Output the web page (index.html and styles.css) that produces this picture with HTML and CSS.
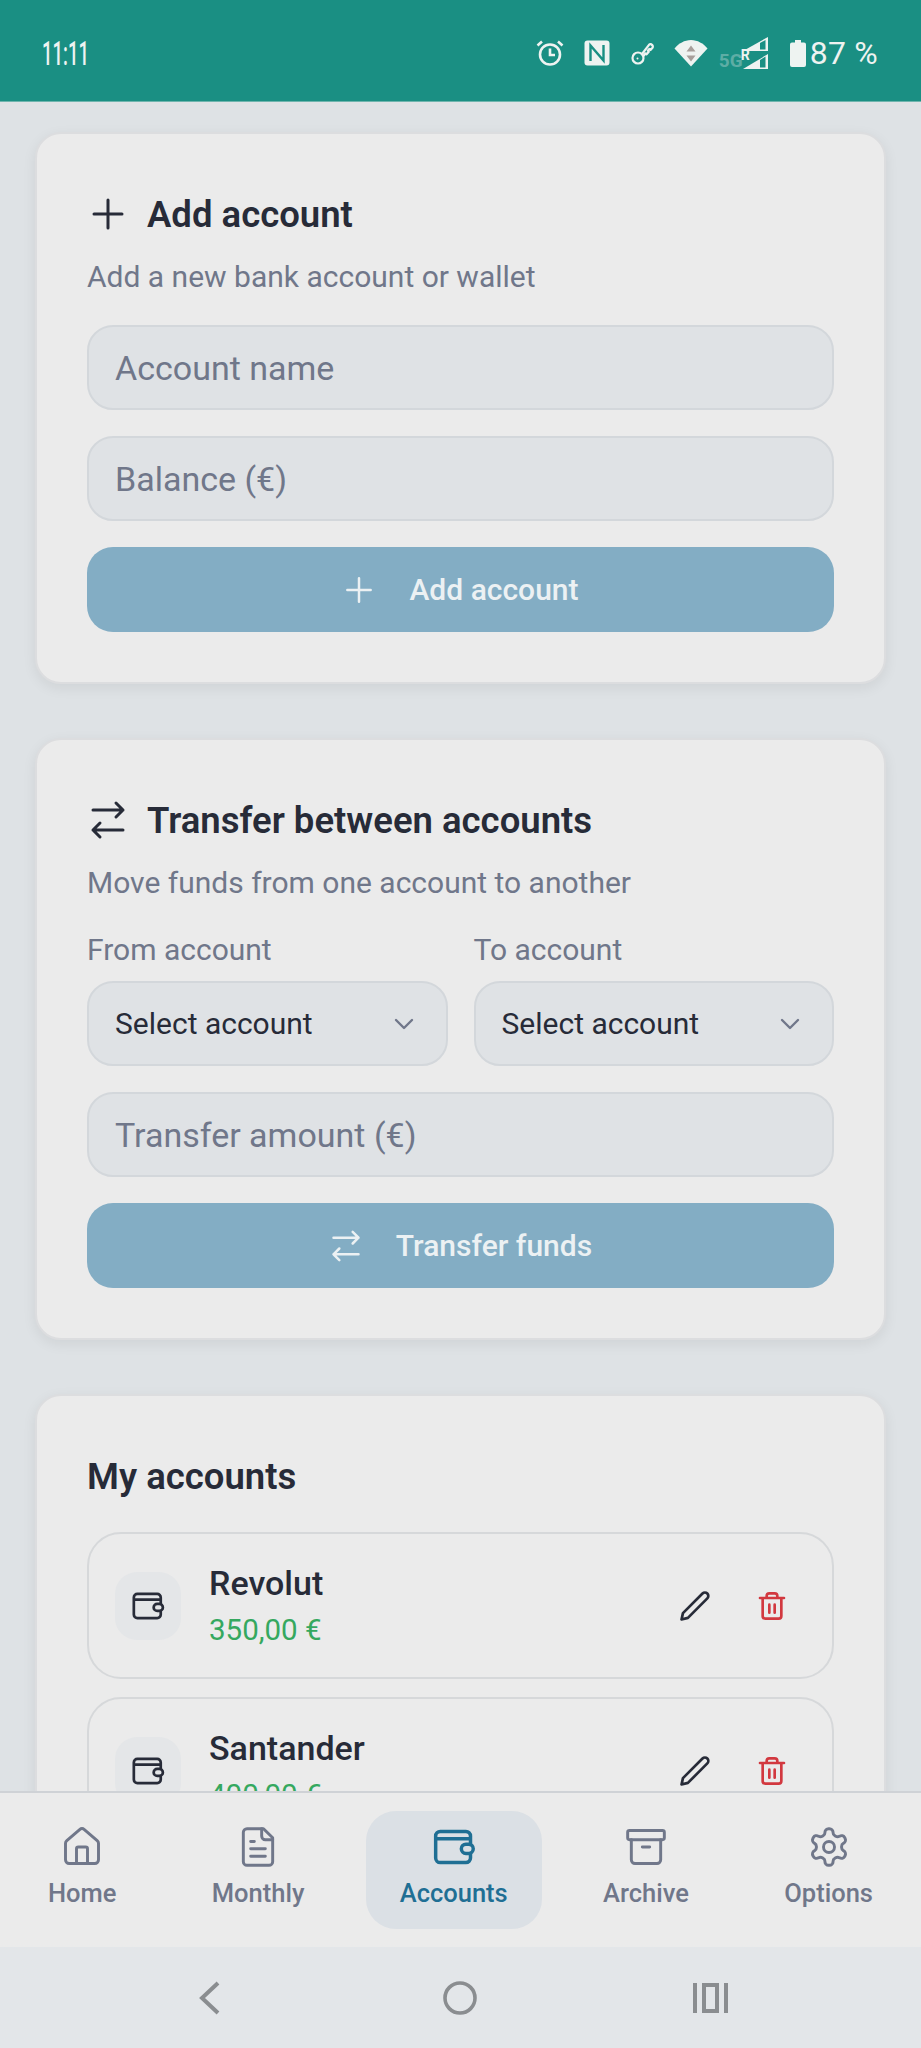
FILE: index.html
```html
<!DOCTYPE html>
<html lang="en">
<head>
    <meta charset="UTF-8">
    <meta name="viewport" content="width=device-width, initial-scale=1.0">
    <title>Accounts</title>
    <link rel="stylesheet" href="styles.css">
</head>
<body>
<svg class="icon-defs" width="0" height="0">
    <symbol id="i-plus" viewBox="0 0 24 24"><path d="M5 12h14M12 5v14"/></symbol>
    <symbol id="i-swap" viewBox="0 0 24 24"><path d="m16 3.500 3.500 3.500-3.500 3.500M19.500 7h-15M8 20.500 4.500 17 8 13.500M4.500 17h15"/></symbol>
    <symbol id="i-chevron" viewBox="0 0 24 24"><path d="m6 9 6 6 6-6"/></symbol>
    <symbol id="i-wallet" viewBox="0 0 24 24"><path d="M21 10.500V6a2.500 2.500 0 0 0-2.500-2.500h-14A2.500 2.500 0 0 0 2 6v12a2.500 2.500 0 0 0 2.500 2.500h14A2.500 2.500 0 0 0 21 18v-2.500M2 7.500h19"/><rect x="16" y="10.500" width="6.500" height="5" rx="2.500"/></symbol>
    <symbol id="i-pencil" viewBox="0 0 24 24"><path d="M2.500 21.500l1-4.500L17.300 3.200a2.300 2.300 0 0 1 3.400 3.400L7 20.400z"/></symbol>
    <symbol id="i-trash" viewBox="0 0 24 24"><path d="M3 6h18M19 6v13.500a2 2 0 0 1-2 2H7a2 2 0 0 1-2-2V6M8 6V4.500a2 2 0 0 1 2-2h4a2 2 0 0 1 2 2V6M10 11v6M14 11v6"/></symbol>
    <symbol id="i-home" viewBox="0 0 24 24"><path d="M15 21v-8a1 1 0 0 0-1-1h-4a1 1 0 0 0-1 1v8"/><path d="M3 10a2 2 0 0 1 .709-1.528l7-5.999a2 2 0 0 1 2.582 0l7 5.999A2 2 0 0 1 21 10v9a2 2 0 0 1-2 2H5a2 2 0 0 1-2-2z"/></symbol>
    <symbol id="i-file" viewBox="0 0 24 24"><path d="M15 2H6a2 2 0 0 0-2 2v16a2 2 0 0 0 2 2h12a2 2 0 0 0 2-2V7Z"/><path d="M14 2v4a2 2 0 0 0 2 2h4M10 9H8M16 13H8M16 17H8"/></symbol>
    <symbol id="i-archive" viewBox="0 0 24 24"><rect x="2" y="3" width="20" height="5" rx="1"/><path d="M4 8v11a2 2 0 0 0 2 2h12a2 2 0 0 0 2-2V8M10 12h4"/></symbol>
    <symbol id="i-gear" viewBox="0 0 24 24"><path d="M12.220 2h-.44a2 2 0 0 0-2 2v.18a2 2 0 0 1-1 1.730l-.43.25a2 2 0 0 1-2 0l-.15-.08a2 2 0 0 0-2.730.73l-.22.38a2 2 0 0 0 .73 2.730l.15.1a2 2 0 0 1 1 1.720v.51a2 2 0 0 1-1 1.740l-.15.09a2 2 0 0 0-.73 2.730l.22.38a2 2 0 0 0 2.730.73l.15-.08a2 2 0 0 1 2 0l.43.25a2 2 0 0 1 1 1.730V20a2 2 0 0 0 2 2h.44a2 2 0 0 0 2-2v-.18a2 2 0 0 1 1-1.730l.43-.25a2 2 0 0 1 2 0l.15.08a2 2 0 0 0 2.730-.73l.22-.39a2 2 0 0 0-.73-2.730l-.15-.08a2 2 0 0 1-1-1.740v-.5a2 2 0 0 1 1-1.740l.15-.09a2 2 0 0 0 .73-2.730l-.22-.38a2 2 0 0 0-2.730-.73l-.15.08a2 2 0 0 1-2 0l-.43-.25a2 2 0 0 1-1-1.730V4a2 2 0 0 0-2-2z"/><circle cx="12" cy="12" r="3"/></symbol>
</svg>

<div class="screen">
    <!-- Android status bar -->
    <header class="status-bar">
        <span class="status-time">11:11</span>
        <div class="status-icons">
            <svg class="st-alarm" viewBox="0 0 28 28" width="28" height="28" fill="none" stroke="#eef3f1" stroke-width="2.600">
                <circle cx="14" cy="15.500" r="10"/>
                <path d="M14 9.500v6.500h5M1.500 6.500 6 2.500M26.500 6.500 22 2.500"/>
            </svg>
            <svg class="st-nfc" viewBox="0 0 26 26" width="26" height="26">
                <rect x="0.500" y="0.500" width="25" height="25" rx="3" fill="#eef3f1"/>
                <path d="M6.500 21V5.500L19.500 20.500V5" fill="none" stroke="#1a8f83" stroke-width="2.400"/>
            </svg>
            <svg class="st-key" viewBox="0 0 24 24" width="24" height="24" fill="none" stroke="#eef3f1" stroke-width="2.200" stroke-linejoin="round">
                <circle cx="7" cy="17" r="5.500"/>
                <circle cx="6.500" cy="17.500" r="1" fill="#eef3f1" stroke="none"/>
                <path d="M11 13 18 3.800a2 2 0 0 1 3 .2 2 2 0 0 1 .5 2.800L19.500 9l-1.200-1-1.500 1.800 1 1-2.200 2.500-1-1L12.500 15"/>
            </svg>
            <svg class="st-wifi" viewBox="0 0 34 28" width="34" height="28">
                <path d="M17 27.500 0.500 9.500C4.500 4.500 10.500 1 17 1s12.500 3.500 16.500 8.500z" fill="#eef3f1"/>
                <path d="M17 6.500l4.500 6h-9zM17 22.500l-4.500-6h9z" fill="#a79f9b"/>
            </svg>
            <span class="st-5g">5G</span>
            <div class="st-signal">
                <svg viewBox="0 0 25 32" width="25" height="32">
                    <path d="M0 14 25 0v14z" fill="#eef3f1"/>
                    <path d="M17 12.500V6L22.500 3v9.500z" fill="#1a8f83"/>
                    <path d="M0 32 25 17v15z" fill="#eef3f1"/>
                    <path d="M17 30.500V23l5.500-3.500v11z" fill="#1a8f83"/>
                </svg>
                <span class="st-r">R</span>
            </div>
            <svg class="st-battery" viewBox="0 0 16 27" width="16" height="27">
                <path d="M5 0h6v2.500h3a2 2 0 0 1 2 2V25a2 2 0 0 1-2 2H2a2 2 0 0 1-2-2V4.500a2 2 0 0 1 2-2h3z" fill="#eef3f1"/>
            </svg>
            <span class="status-level">87 %</span>
        </div>
    </header>

    <main class="content">
        <section class="card">
            <h2 class="card-title">
                <svg class="title-icon"><use href="#i-plus"/></svg>
                Add account
            </h2>
            <p class="card-sub">Add a new bank account or wallet</p>
            <div class="stack">
                <input class="field" type="text" placeholder="Account name">
                <input class="field" type="text" placeholder="Balance (€)">
                <button class="btn" type="button">
                    <svg class="btn-icon"><use href="#i-plus"/></svg>
                    Add account
                </button>
            </div>
        </section>

        <section class="card">
            <h2 class="card-title">
                <svg class="title-icon"><use href="#i-swap"/></svg>
                Transfer between accounts
            </h2>
            <p class="card-sub">Move funds from one account to another</p>
            <div class="select-row">
                <div class="select-col">
                    <label class="select-label">From account</label>
                    <div class="select">
                        <span>Select account</span>
                        <svg class="select-chevron"><use href="#i-chevron"/></svg>
                    </div>
                </div>
                <div class="select-col">
                    <label class="select-label">To account</label>
                    <div class="select">
                        <span>Select account</span>
                        <svg class="select-chevron"><use href="#i-chevron"/></svg>
                    </div>
                </div>
            </div>
            <div class="stack">
                <input class="field" type="text" placeholder="Transfer amount (€)">
                <button class="btn" type="button">
                    <svg class="btn-icon"><use href="#i-swap"/></svg>
                    Transfer funds
                </button>
            </div>
        </section>

        <section class="card">
            <h2 class="card-title card-title-plain">My accounts</h2>
            <div class="account-list">
                <div class="account">
                    <div class="account-tile"><svg class="wallet-icon"><use href="#i-wallet"/></svg></div>
                    <div class="account-info">
                        <div class="account-name">Revolut</div>
                        <div class="account-balance">350,00 €</div>
                    </div>
                    <svg class="act-edit"><use href="#i-pencil"/></svg>
                    <svg class="act-delete"><use href="#i-trash"/></svg>
                </div>
                <div class="account">
                    <div class="account-tile"><svg class="wallet-icon"><use href="#i-wallet"/></svg></div>
                    <div class="account-info">
                        <div class="account-name">Santander</div>
                        <div class="account-balance">400,00 €</div>
                    </div>
                    <svg class="act-edit"><use href="#i-pencil"/></svg>
                    <svg class="act-delete"><use href="#i-trash"/></svg>
                </div>
            </div>
        </section>
    </main>

    <nav class="tabs">
        <a class="tab"><svg class="tab-icon"><use href="#i-home"/></svg>Home</a>
        <a class="tab"><svg class="tab-icon"><use href="#i-file"/></svg>Monthly</a>
        <a class="tab tab-active"><svg class="tab-icon"><use href="#i-wallet"/></svg>Accounts</a>
        <a class="tab"><svg class="tab-icon"><use href="#i-archive"/></svg>Archive</a>
        <a class="tab"><svg class="tab-icon"><use href="#i-gear"/></svg>Options</a>
    </nav>

    <!-- Android navigation buttons -->
    <footer class="sys-nav">
        <svg viewBox="0 0 22 34" width="22" height="34" fill="none" stroke="#8a8d90" stroke-width="4"><path d="M20 2 4 17l16 15"/></svg>
        <svg class="sys-home" viewBox="0 0 34 34" width="34" height="34" fill="none" stroke="#8a8d90" stroke-width="3.600"><circle cx="17" cy="17" r="15"/></svg>
        <svg viewBox="0 0 35 30" width="35" height="30" fill="none" stroke="#8a8d90" stroke-width="4"><path d="M2 0v30M33 0v30"/><rect x="11" y="2" width="13" height="26"/></svg>
    </footer>
</div>
</body>
</html>
```

FILE: styles.css
```css
* {
    box-sizing: border-box;
}
body {
    margin: 0;
    font-family: Roboto, "Liberation Sans", sans-serif;
    color: #272b38;
}
.icon-defs {
    position: absolute;
}
svg {
    flex: none;
}
symbol {
    overflow: visible;
}
.screen {
    display: flex;
    flex-direction: column;
    height: 2048px;
    background: #dee2e5;
    overflow: hidden;
}

/* status bar */
.status-bar {
    display: flex;
    align-items: center;
    justify-content: space-between;
    height: 102px;
    padding: 5px 43px 0 42px;
    background: #1a8f83;
    border-bottom: 1px solid #6fb5ae;
    color: #eef3f1;
    flex: none;
}
.status-time {
    display: inline-block;
    font-size: 33px;
    font-weight: 500;
    transform: scaleX(0.56);
    transform-origin: left center;
}
.status-icons {
    display: flex;
    align-items: center;
}
.st-alarm {
    margin-right: 20px;
}
.st-nfc {
    margin-right: 21px;
}
.st-key {
    margin-right: 19px;
}
.st-wifi {
    margin-right: 11px;
}
.st-5g {
    width: 24px;
    margin-top: 15px;
    font-size: 19px;
    font-weight: 700;
    color: #5dada5;
}
.st-signal {
    position: relative;
    width: 25px;
    height: 32px;
    margin-right: 22px;
}
.st-r {
    position: absolute;
    left: -2px;
    top: 11px;
    font-size: 14px;
    font-weight: 700;
    line-height: 15px;
}
.st-battery {
    margin-right: 4px;
}
.status-level {
    font-size: 32px;
    letter-spacing: 0.2px;
}

/* scrolling content */
.content {
    flex: 1;
    min-height: 0;
    padding: 30px 35px 0;
    overflow: hidden;
    display: flex;
    flex-direction: column;
    gap: 54px;
}
.card {
    flex: none;
    padding: 50px;
    background: #ebebeb;
    border: 2px solid #dcdddf;
    border-radius: 26px;
    box-shadow: 0 4px 14px rgba(0, 0, 0, 0.07);
}
.card-title {
    display: flex;
    align-items: center;
    gap: 15px;
    margin: 0;
    height: 60px;
    font-size: 36.500px;
    font-weight: 600;
}
.title-icon {
    width: 48px;
    height: 48px;
    margin-left: -3px;
    fill: none;
    stroke: #272b38;
    stroke-width: 1.5;
    stroke-linecap: round;
    stroke-linejoin: round;
}
.card-sub {
    margin: 13px 0 28px;
    font-size: 30px;
    line-height: 40px;
    color: #70778a;
}
.stack {
    display: flex;
    flex-direction: column;
    gap: 26px;
}
.field {
    display: block;
    width: 100%;
    height: 85px;
    padding: 0 26px;
    background: #dfe2e5;
    border: 2px solid #d3d7db;
    border-radius: 26px;
    font-family: inherit;
    font-size: 34px;
    color: #272b38;
    outline: none;
}
.field::placeholder {
    color: #70778a;
    opacity: 1;
}
.btn {
    display: flex;
    align-items: center;
    justify-content: center;
    gap: 30px;
    height: 85px;
    padding: 0 3px 0 0;
    background: #83adc4;
    border: none;
    border-radius: 26px;
    font-family: inherit;
    font-size: 30px;
    font-weight: 500;
    color: #ecf1f3;
}
.btn-icon {
    width: 40px;
    height: 40px;
    fill: none;
    stroke: #ecf1f3;
    stroke-width: 1.5;
    stroke-linecap: round;
    stroke-linejoin: round;
}

/* transfer selects */
.select-row {
    display: flex;
    gap: 26px;
    margin-bottom: 26px;
    margin-top: -1px;
}
.select-col {
    flex: 1;
    min-width: 0;
}
.select-label {
    display: block;
    font-size: 30px;
    line-height: 40px;
    margin-bottom: 11px;
    color: #70778a;
}
.select {
    display: flex;
    align-items: center;
    justify-content: space-between;
    height: 85px;
    padding: 0 26px;
    background: #dfe2e5;
    border: 2px solid #d3d7db;
    border-radius: 26px;
    font-size: 30px;
}
.select-chevron {
    width: 32px;
    height: 32px;
    fill: none;
    stroke: #70778a;
    stroke-width: 1.8;
    stroke-linecap: round;
    stroke-linejoin: round;
}

/* account list */
.account-list {
    display: flex;
    flex-direction: column;
    gap: 18px;
    margin-top: 26px;
}
.account {
    display: flex;
    align-items: center;
    height: 147px;
    padding: 0 44px 0 26px;
    border: 2px solid #d6d8da;
    border-radius: 34px;
}
.account-tile {
    display: flex;
    align-items: center;
    justify-content: center;
    width: 66px;
    height: 68px;
    background: #e4e6e8;
    border-radius: 22px;
}
.wallet-icon {
    width: 34px;
    height: 34px;
    fill: none;
    stroke: #272b38;
    stroke-width: 1.9;
    stroke-linecap: round;
    stroke-linejoin: round;
}
.account-info {
    flex: 1;
    margin-left: 28px;
}
.account-name {
    font-size: 34px;
    font-weight: 500;
    line-height: 44px;
}
.account-balance {
    margin-top: 5px;
    font-size: 29.500px;
    line-height: 40px;
    color: #35a85f;
}
.act-edit {
    width: 34px;
    height: 34px;
    margin-right: 44px;
    fill: none;
    stroke: #272b38;
    stroke-width: 1.9;
    stroke-linejoin: round;
}
.act-delete {
    width: 32px;
    height: 32px;
    fill: none;
    stroke: #d2383f;
    stroke-width: 2;
    stroke-linecap: round;
    stroke-linejoin: round;
}

/* bottom tabs */
.tabs {
    display: flex;
    justify-content: space-between;
    align-items: center;
    flex: none;
    height: 156px;
    padding: 0 14px;
    background: #ebebeb;
    border-top: 2px solid #cfd2d6;
}
.tab {
    display: flex;
    flex-direction: column;
    align-items: center;
    height: 118px;
    padding: 14px 34px 0;
    border-radius: 30px;
    font-size: 25.500px;
    font-weight: 500;
    line-height: 32px;
    color: #70778a;
}
.tab-active {
    background: #dbe0e5;
    color: #1f6f94;
}
.tab-icon {
    width: 44px;
    height: 44px;
    margin-bottom: 8px;
    fill: none;
    stroke: currentColor;
    stroke-width: 1.6;
    stroke-linecap: round;
    stroke-linejoin: round;
}
.tab-active .tab-icon {
    stroke-width: 1.900;
}

/* system navigation */
.sys-nav {
    display: flex;
    align-items: center;
    flex: none;
    height: 101px;
    padding: 0 193px 0 198px;
    justify-content: space-between;
    background: #e3e6e9;
}
.sys-home {
    margin-left: 6px;
}
```
